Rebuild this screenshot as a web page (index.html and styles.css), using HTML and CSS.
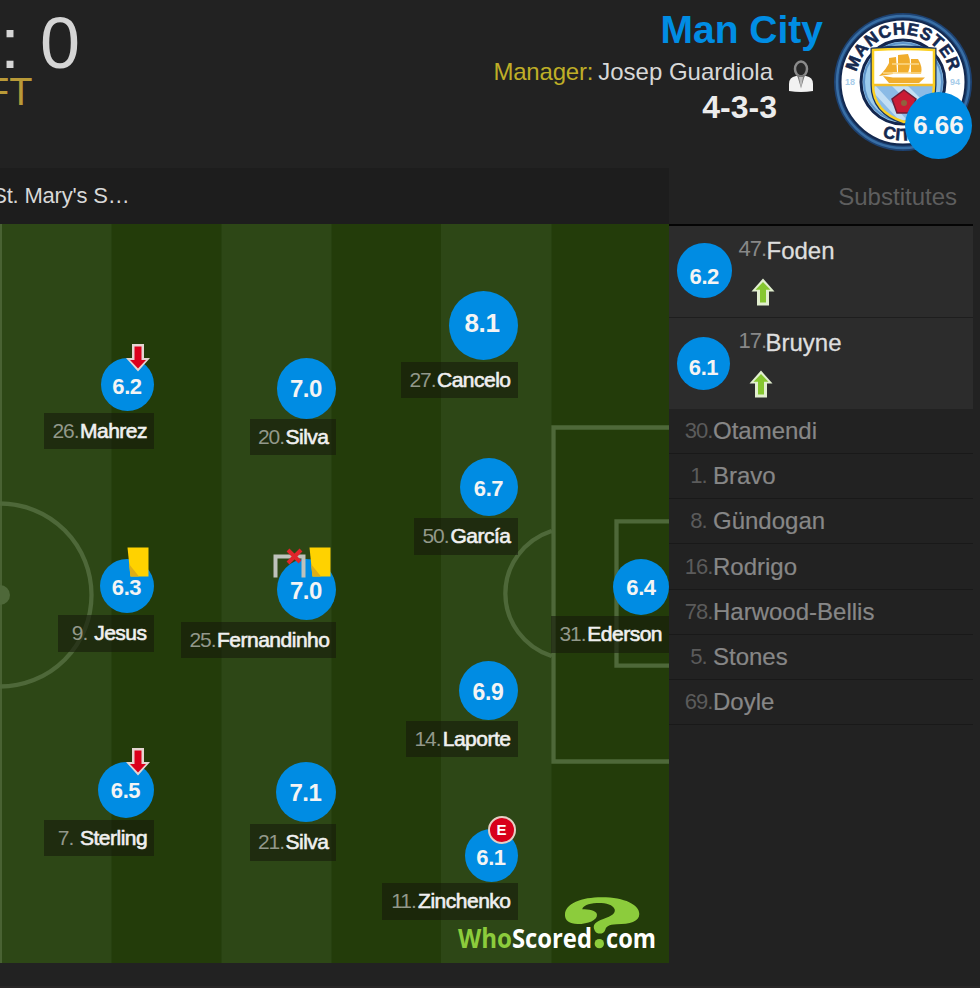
FILE: index.html
```html
<!DOCTYPE html>
<html lang="en">
<head>
<meta charset="utf-8">
<title>Match centre</title>
<link rel="stylesheet" href="styles.css">
</head>
<body>
<svg class="defs" aria-hidden="true">
  <symbol id="down" viewBox="0 0 24 28"><path d="M6 0h12v14H24L12 27.500 0 14h6z" fill="#e5d5d2"/><path d="M8.500 2.500h7v13.500H20L12 24.500 4 16h4.500z" fill="#db001b"/></symbol>
  <symbol id="up" viewBox="0 0 24 28"><path d="M12 .5 23.500 13.500h-5.500V27.500h-12V13.500H.5z" fill="#e2efcf"/><path d="M12 4l7.500 7.700H15V24.500H9V11.700H4.500z" fill="#86c730"/></symbol>
  <symbol id="card" viewBox="0 0 22 30"><path d="M.5.500H21.500V29.500H3.500z" fill="#ffd200"/><path d="M2 17l10 12.500H3.500z" fill="#dfae16"/></symbol>
</svg>
<header class="top">
  <div class="score">
    <div class="goals">: 0</div>
    <div class="status">FT</div>
  </div>
  <div class="team">
    <div class="info">
      <h1>Man City</h1>
      <div class="manager"><span class="role">Manager:</span> <span>Josep Guardiola</span>
        <svg class="person" viewBox="0 0 26 32"><path d="M1 31V24Q1 17 8 16H18Q25 17 25 24V31Q13 33 1 31z" fill="#f2f2f2"/><ellipse cx="13" cy="9" rx="6" ry="7.500" fill="#292929" stroke="#8b8b8b" stroke-width="2.500"/><path d="M9 15 13 28 17 15z" fill="#777"/><path d="M11 17h4l-2 12z" fill="#bbb"/></svg>
      </div>
      <div class="formation">4-3-3</div>
    </div>
    <div class="badge">
      <svg viewBox="0 0 140 140" class="crest">
        <defs><path id="arcTop" d="M22.500 70a47.500 47.500 0 0 1 95 0"/><path id="arcBot" d="M11.500 70a58.500 58.500 0 0 0 117 0"/><clipPath id="sh"><path d="M40 38H101V73Q101 100 71 110 40 100 40 73z"/></clipPath></defs>
        <circle cx="70" cy="70" r="69" fill="#1d4272"/><circle cx="70" cy="70" r="66" fill="none" stroke="#386ea5" stroke-width="2.500"/><circle cx="70" cy="70" r="62.500" fill="#fff" stroke="#12284f" stroke-width="2"/>
        <circle cx="70" cy="70" r="42" fill="#9ccbec" stroke="#13264e" stroke-width="3"/><circle cx="70" cy="70" r="39" fill="none" stroke="#5d93c9" stroke-width="2"/>
        <path d="M40 38Q70 34 101 38V73Q101 100 71 110 40 100 40 73z" fill="#17335f" stroke="#17335f" stroke-width="5"/>
        <g clip-path="url(#sh)"><path d="M40 36H101V73H40z" fill="#fff"/><path d="M40 73H101V111H40z" fill="#8bbbe6"/><path d="M40 80 66 108 74 108 42 73zM58 73 90 105 98 97 74 73z" fill="#c2def4"/><path d="M40 73H101" stroke="#f3bd28" stroke-width="2.500"/></g>
        <path d="M40 38Q70 36 101 38V73Q101 100 71 110 40 100 40 73z" fill="none" stroke="#fbd022" stroke-width="2.500"/>
        <path d="M46 64Q53 58 57 49L60 62zM56 46l7-1 1 15H56zM65 43l10-1Q79 51 75 61H65zM78 47l7 0q5 8 3 15H78zM50 64l10 1.500H92L86 71H56z" fill="#f0ad2d"/><path d="M50 61h38M59 52h27" stroke="#fbd98b" stroke-width="1.300"/>
        <path d="M71 78 83 87 78 101H64L59 87z" fill="#ca1b35" stroke="#6a1f38" stroke-width="1.500"/><circle cx="71" cy="91" r="3" fill="#8f623d"/>
        <text class="crest-name"><textPath href="#arcTop" startOffset="50%" text-anchor="middle">MANCHESTER</textPath></text>
        <text class="crest-name"><textPath href="#arcBot" startOffset="50%" text-anchor="middle">CITY</textPath></text>
        <text x="17" y="73" text-anchor="middle" class="crest-year">18</text><text x="122" y="73" text-anchor="middle" class="crest-year">94</text>
      </svg>
      <div class="team-rating">6.66</div>
    </div>
  </div>
</header>
<main class="board">
  <section class="left">
    <div class="venue"><span>St. Mary's S…</span></div>
    <div class="pitch">
      <svg class="lines" viewBox="0 224 669 739">
        <path d="M0 224H669V963H0z" fill="#233c0a"/>
        <path d="M0 224H111.500V963H0zM221.500 224H331.500V963H221.500zM441 224H551.500V963H441z" fill="#2d4716"/>
        <g fill="none" stroke="#4e6839" stroke-width="4.300"><path d="M1 224V963" stroke-width="2" stroke="#496233"/><circle cx="0" cy="595" r="91.500"/><path d="M669 427.500H553.500V761.500H669M669 521.300H616.500V665.600H669M551.500 531A68 66 0 0 0 551.500 656"/></g>
        <circle cx="0" cy="595" r="10" fill="#4e6839"/>
        <g class="brand"><text x="458" y="948" textLength="54" lengthAdjust="spacingAndGlyphs" fill="#8ccc3c">Who</text><text x="512" y="948" textLength="80" lengthAdjust="spacingAndGlyphs" fill="#fff">Scored</text><text x="606" y="948" textLength="50" lengthAdjust="spacingAndGlyphs" fill="#fff">com</text></g>
        <g transform="translate(370 780) scale(.3333)" fill="#8ccc3c"><path d="M585 405C585 370 635 352 695 352C765 352 808 375 808 402C808 425 780 432 740 433C715 434 709 440 706 449C702 463 682 465 675 453C665 435 676 425 700 417C727 408 737 400 734 388C729 373 705 368 680 369C655 370 638 378 637 388C655 388 680 391 681 404C682 420 655 432 623 432C598 432 585 421 585 405z"/><circle cx="688" cy="491" r="14"/></g>
      </svg>
      <div class="player mahrez"><b class="dot">6.2</b><div class="label"><i>26.</i><span>Mahrez</span></div><svg class="ic arrow"><use href="#down"/></svg></div>
      <div class="player jesus"><b class="dot">6.3</b><div class="label"><i>9.</i><span>Jesus</span></div><svg class="ic card"><use href="#card"/></svg></div>
      <div class="player sterling"><b class="dot">6.5</b><div class="label"><i>7.</i><span>Sterling</span></div><svg class="ic arrow"><use href="#down"/></svg></div>
      <div class="player silva20"><b class="dot">7.0</b><div class="label"><i>20.</i><span>Silva</span></div></div>
      <div class="player fernandinho"><b class="dot">7.0</b><div class="label"><i>25.</i><span>Fernandinho</span></div><svg class="ic card"><use href="#card"/></svg>
        <svg class="ic goal" viewBox="0 0 34 30"><path d="M2.500 29.500V8.500H30.500V29.500" fill="none" stroke="#bfc2bc" stroke-width="4"/><path d="M15 2 27 14M28 2 15 15" stroke="#e0252b" stroke-width="4"/></svg></div>
      <div class="player silva21"><b class="dot">7.1</b><div class="label"><i>21.</i><span>Silva</span></div></div>
      <div class="player cancelo"><b class="dot">8.1</b><div class="label"><i>27.</i><span>Cancelo</span></div></div>
      <div class="player garcia"><b class="dot">6.7</b><div class="label"><i>50.</i><span>García</span></div></div>
      <div class="player laporte"><b class="dot">6.9</b><div class="label"><i>14.</i><span>Laporte</span></div></div>
      <div class="player zinchenko"><b class="dot">6.1</b><div class="label"><i>11.</i><span>Zinchenko</span></div><b class="error">E</b></div>
      <div class="player ederson"><b class="dot">6.4</b><div class="label"><i>31.</i><span>Ederson</span></div></div>
    </div>
  </section>
  <aside class="subs">
    <h2>Substitutes</h2>
    <div class="used foden"><b class="dot">6.2</b><div class="who"><div class="name"><i>47.</i><span>Foden</span></div><svg class="up"><use href="#up"/></svg></div></div>
    <div class="used bruyne"><b class="dot">6.1</b><div class="who"><div class="name"><i>17.</i><span>Bruyne</span></div><svg class="up"><use href="#up"/></svg></div></div>
    <div class="bench"><i>30.</i><span>Otamendi</span></div>
    <div class="bench"><i>1.</i><span>Bravo</span></div>
    <div class="bench"><i>8.</i><span>Gündogan</span></div>
    <div class="bench tall"><i>16.</i><span>Rodrigo</span></div>
    <div class="bench"><i>78.</i><span>Harwood-Bellis</span></div>
    <div class="bench"><i>5.</i><span>Stones</span></div>
    <div class="bench"><i>69.</i><span>Doyle</span></div>
  </aside>
</main>
<footer class="foot"></footer>
</body>
</html>
```
FILE: styles.css
```css
* { box-sizing: border-box; }
body { margin: 0; width: 980px; height: 988px; overflow: hidden; background: #222; color: #d8d8d8; font-family: "Liberation Sans", Arial, sans-serif; display: flex; flex-direction: column; }
i { font-style: normal; }
svg { display: block; }
.defs { display: none; }

.top { height: 168px; flex: none; display: flex; justify-content: space-between; }
.score { padding-top: 3px; }
.goals { font-size: 72px; line-height: 80px; height: 68px; margin-left: 0; white-space: pre; color: #d5d5d5; }
.status { font-size: 38px; line-height: 42px; margin-left: -14px; color: #b99a38; }
.team { display: flex; padding-right: 7px; }
.info { width: 330px; display: flex; flex-direction: column; align-items: flex-end; margin-right: 10px; }
h1 { margin: 7px 0 0; font-size: 39px; line-height: 46px; color: #008de4; }
.manager { display: flex; gap: 5px; font-size: 24px; line-height: 38px; height: 38px; white-space: nowrap; margin-right: 9px; }
.role { color: #bfae27; letter-spacing: -.2px; }
.person { width: 26px; height: 32px; margin: 7px 0 0 10px; }
.formation { font-size: 32px; font-weight: 700; line-height: 32px; margin-right: 46px; color: #ececec; }
.badge { position: relative; width: 140px; height: 160px; padding-top: 12px; }
.crest { width: 140px; height: 140px; }
.crest-name { font: 700 17px "Liberation Sans", sans-serif; letter-spacing: .9px; fill: #14284f; stroke: #14284f; stroke-width: .6px; }
.crest-year { font: 700 9px "Liberation Sans", sans-serif; fill: #a8cdea; }
.team-rating { position: absolute; right: 1px; top: 92px; width: 67px; height: 67px; border-radius: 50%; background: #008ce3; color: #f4f4f4; font-weight: 700; font-size: 26px; line-height: 67px; text-align: center; }

.board { display: flex; height: 795px; flex: none; }
.left { width: 669px; }
.venue { height: 56px; background: #1d1d1d; width: 669px; display: flex; font-size: 22px; line-height: 56px; white-space: nowrap; overflow: hidden; }
.venue span { width: 129.500px; display: flex; justify-content: flex-end; letter-spacing: -.2px; }
.pitch { position: relative; height: 739px; overflow: hidden; }
.lines { width: 669px; height: 739px; }
.brand { font: 700 26px "Open Sans", sans-serif; }

.player { position: absolute; display: flex; flex-direction: column; align-items: flex-end; justify-content: space-between; }
.dot { display: flex; align-items: center; justify-content: center; border-radius: 50%; background: #008ce3; color: #f4f4f4; font-size: 22px; line-height: 24px; letter-spacing: -.4px; }
.label { width: 100%; height: 36.500px; padding: 0 7px 0 7px; display: flex; justify-content: space-between; align-items: center; background: rgba(22, 28, 12, .62); font-size: 21px; white-space: nowrap; }
.label i { width: 29px; text-align: center; color: #92988a; font-size: 21px; letter-spacing: -1px; flex: none; }
.label span { color: #f0f0f0; letter-spacing: -.5px; -webkit-text-stroke: .6px #f0f0f0; }

.mahrez { left: 44px; top: 134px; width: 109.500px; height: 91px; }
.mahrez .dot { width: 53px; height: 53px; padding-top: 4px; }
.jesus { left: 58px; top: 335px; width: 95.500px; height: 92.500px; }
.jesus .dot { width: 54px; height: 54px; padding-top: 3px; }
.sterling { left: 44px; top: 538px; width: 109.500px; height: 94px; }
.sterling .dot { width: 56px; height: 56px; padding-top: 2px; }
.silva20 { left: 249.500px; top: 134px; width: 86px; height: 97px; }
.silva20 .dot, .fernandinho .dot { width: 59px; height: 61px; font-size: 24px; padding-top: 2px; }
.fernandinho { left: 181px; top: 335px; width: 154.500px; height: 99px; }
.silva21 { left: 249.500px; top: 538px; width: 86px; height: 98.500px; }
.silva21 .dot { width: 60px; height: 60px; font-size: 24px; padding-top: 2px; }
.cancelo { left: 401px; top: 67px; width: 116.500px; height: 107px; }
.cancelo .dot { width: 69px; height: 69px; font-size: 26px; padding-bottom: 5px; padding-right: 2px; }
.garcia { left: 414px; top: 234px; width: 103.500px; height: 96.500px; }
.garcia .dot { width: 58px; height: 58px; padding-top: 3px; }
.laporte { left: 406px; top: 437px; width: 111.500px; height: 96px; }
.laporte .dot { width: 59px; height: 59px; padding-top: 2px; font-size: 23px; }
.zinchenko { left: 382px; top: 605px; width: 135.500px; height: 90.500px; }
.zinchenko .dot { width: 53px; height: 53px; padding-top: 4px; }
.ederson { left: 551px; top: 335px; width: 118px; height: 93.500px; }
.ederson .dot { width: 56px; height: 56px; padding-top: 2px; }

.ic { position: absolute; overflow: visible; }
.arrow { width: 24px; height: 28px; right: 4px; top: -14px; }
.card { width: 22px; height: 30px; right: 5px; top: -12px; }
.goal { width: 34px; height: 30px; right: 28.500px; top: -11px; }
.error { position: absolute; right: 2px; top: -13px; width: 28px; height: 28px; border-radius: 50%; border: 2px solid #e5cfc5; background: #d8001b; color: #fff; font-size: 15px; line-height: 24px; text-align: center; }

.subs { width: 304px; }
h2 { margin: 0; height: 58px; border-bottom: 2px solid #050505; padding-right: 16px; text-align: right; font-size: 24px; font-weight: 400; line-height: 57px; color: #5e5e5e; }
.used { height: 92px; background: #2c2c2c; border-bottom: 1px solid #1e1e1e; display: flex; padding-left: 8px; }
.used.bruyne { height: 91px; border-bottom: 0; }
.used .dot { width: 54.500px; height: 54.500px; margin-top: 17px; padding-top: 13px; flex: none; }
.used.bruyne .dot { width: 53px; height: 53px; margin-top: 19px; padding-top: 9px; }
.who { margin-left: 7px; width: 200px; }
.bruyne .who { margin-left: 8.500px; }
.name { display: flex; height: 50px; line-height: 50px; font-size: 24px; color: #dedede; }
.name span { -webkit-text-stroke: .3px #dedede; }
.name i { width: 28px; font-size: 22px; line-height: 46px; letter-spacing: -1px; color: #888; }
.bruyne .name i { width: 27px; }
.up { width: 24px; height: 28px; margin: 2px 0 0 12px; }
.bruyne .up { margin-left: 10px; }
.bench { height: 44.900px; display: flex; border-bottom: 1px solid #191919; line-height: 43.500px; font-size: 24px; color: #878787; }
.bench span { -webkit-text-stroke: .2px #878787; }
.bench.tall { height: 46.300px; line-height: 46px; }
.bench i { margin-left: 15px; width: 29px; text-align: center; font-size: 22px; letter-spacing: -1px; color: #5b5b5b; }
.foot { margin-top: 23px; height: 2px; background: #292727; }
```
